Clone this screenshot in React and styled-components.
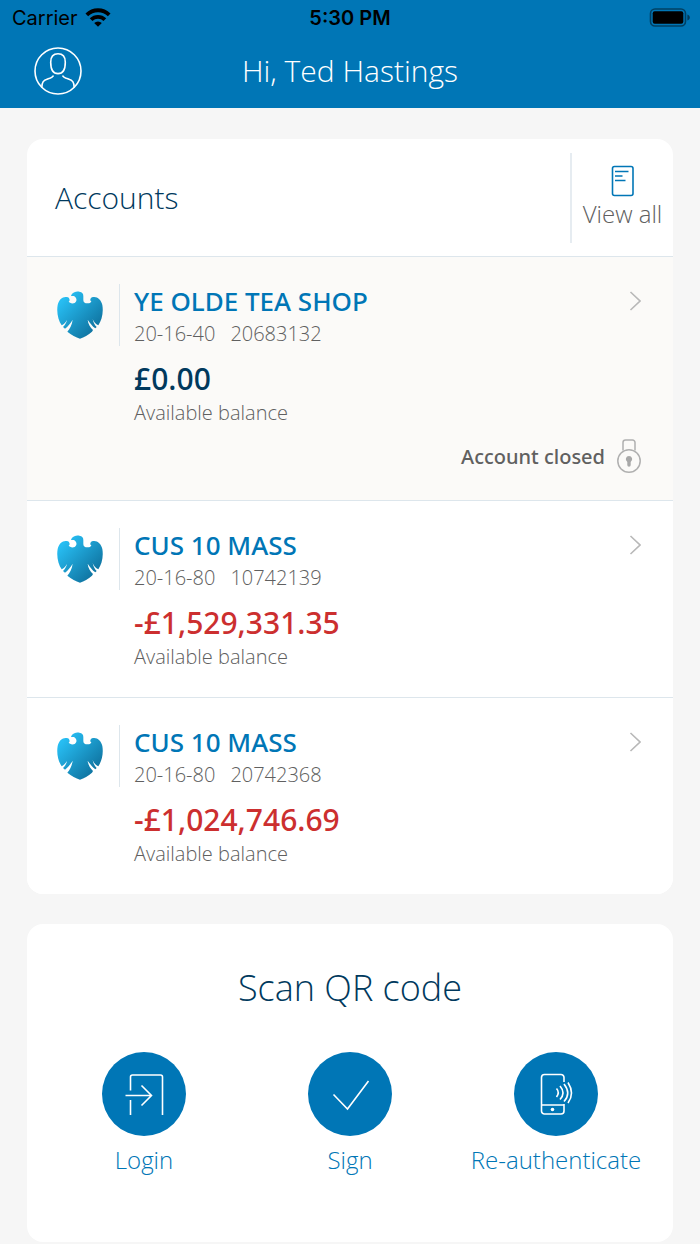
import React from 'react';
import styled, { createGlobalStyle } from 'styled-components';

const accounts = [
  {
    id: 1,
    name: 'YE OLDE TEA SHOP',
    sortCode: '20-16-40',
    number: '20683132',
    balance: '£0.00',
    closed: true,
  },
  {
    id: 2,
    name: 'CUS 10 MASS',
    sortCode: '20-16-80',
    number: '10742139',
    balance: '-£1,529,331.35',
    overdrawn: true,
  },
  {
    id: 3,
    name: 'CUS 10 MASS',
    sortCode: '20-16-80',
    number: '20742368',
    balance: '-£1,024,746.69',
    overdrawn: true,
  },
];

const WifiIcon = () => (
  <svg width="26" height="20" viewBox="0 0 26 20" aria-hidden="true">
    <g fill="none" stroke="#000" strokeWidth="3.8">
      <path d="M1.8 6.8a16 16 0 0 1 22.4 0" />
      <path d="M6.1 11.7a9.8 9.8 0 0 1 13.8 0" />
    </g>
    <path d="M9.2 15a5.4 5.4 0 0 1 7.6 0L13 18.8z" />
  </svg>
);

const BatteryIcon = () => (
  <svg width="42" height="20" viewBox="0 0 42 20" aria-hidden="true">
    <rect x="2.500" y="1" width="35" height="17" rx="4.5" fill="none" stroke="#000" strokeOpacity="0.45" strokeWidth="1.6" />
    <rect x="4.700" y="3.200" width="30.600" height="12.600" rx="2" />
    <path d="M39.400 6.400c1.600.6 2.400 1.700 2.400 3.100s-.8 2.500-2.400 3.100z" fillOpacity="0.5" />
  </svg>
);

const ProfileIcon = () => (
  <svg width="48" height="48" viewBox="0 0 48 48" fill="none" stroke="#fff" strokeWidth="1.6" aria-hidden="true">
    <circle cx="24" cy="24" r="23" />
    <path d="M24 6.8c4.6 0 7.3 2.6 7.3 8.4 0 7-2.7 11.4-7.3 11.4s-7.3-4.4-7.3-11.4c0-5.8 2.7-8.4 7.3-8.4z" />
    <path d="M19.4 28.4c-1 3.4-8.2 3.2-10.2 6.2-1.2 1.8-1.4 3.4-1.4 5.800M28.600 28.400c1 3.400 8.200 3.200 10.200 6.200 1.200 1.800 1.400 3.400 1.400 5.800" />
  </svg>
);

const StatementIcon = () => (
  <svg width="24" height="32" viewBox="0 0 24 32" fill="none" stroke="#0076b6" strokeWidth="1.6" aria-hidden="true">
    <rect x="1.5" y="1.5" width="20.5" height="29" rx="2" />
    <path d="M4 6.500h13.500M4 11h7.500M4 15.500h10.500" />
  </svg>
);

const ChevronIcon = () => (
  <Chevron width="12" height="20" viewBox="0 0 12 20" fill="none" stroke="#b8b8b8" strokeWidth="1.6" aria-hidden="true">
    <path d="M1.500 1l9.500 9-9.500 9" />
  </Chevron>
);

const PadlockIcon = () => (
  <svg width="24" height="35" viewBox="0 0 24 35" aria-hidden="true">
    <g fill="none" stroke="#b0b0b0" strokeWidth="1.5">
      <path d="M6 11.500V3.500a2.500 2.500 0 0 1 2.500-2.500h7A2.500 2.500 0 0 1 18 3.500V11.500" />
      <circle cx="12" cy="22" r="11.200" />
    </g>
    <path d="M12 17a3.200 3.200 0 0 1 1.700 5.900v3.100a1.700 1.700 0 0 1-3.400 0v-3.100a3.200 3.200 0 0 1 1.700-5.900z" fill="#a8a8a8" />
  </svg>
);

const EagleLogo = ({ id }) => (
  <svg width="46" height="48" viewBox="0 0 138 144" aria-hidden="true">
    <defs>
      <linearGradient id={id} x1="0" y1="0" x2="1" y2="1">
        <stop offset="0.15" stopColor="#27bdf2" />
        <stop offset="0.9" stopColor="#0d6c98" />
      </linearGradient>
    </defs>
    <path
      fill={`url(#${id})`}
      d="M42 15C46 4 58 1 67 2C76 3 79 8 79 16V27C79 34 83 37 92 37C99 37 102 34 103 30C99 32 98 23 105 19C118 14 132 24 136 42C140 66 134 88 124 103C116 99 110 93 107 84C109 95 113 102 119 108L115 112C106 106 99 96 92 86C93 98 100 109 108 117L105 122C94 131 81 139 69 143C57 139 43 131 31 122C38 114 45 102 47 86C40 97 33 106 24 113L18 108C24 102 29 94 30 87C26 94 20 100 14 103C4 88 -2 65 2 42C6 23 20 14 33 19C39 22 39 31 35 31C37 37 47 39 53 36C60 32 60 22 54 17C50 14 44 16 42 15Z"
    />
  </svg>
);

const LoginIcon = () => (
  <svg width="84" height="84" viewBox="0 0 84 84" fill="none" stroke="#fff" strokeWidth="1.6" aria-hidden="true">
    <path d="M28.500 38.500V25a2 2 0 0 1 2-2h28a2 2 0 0 1 2 2v38M28.500 48v15" />
    <path d="M23.500 43.500h25.500M39.500 33.500l10 10-10 10" />
  </svg>
);

const SignIcon = () => (
  <svg width="84" height="84" viewBox="0 0 84 84" fill="none" stroke="#fff" strokeWidth="1.6" aria-hidden="true">
    <path d="M25.500 42.500l14 14.500L60.500 29" />
  </svg>
);

const PhoneIcon = () => (
  <svg width="84" height="84" viewBox="0 0 84 84" fill="none" stroke="#fff" strokeWidth="1.6" aria-hidden="true">
    <path d="M50 30v-4.500a3 3 0 0 0-3-3H30.500a3 3 0 0 0-3 3V59a3 3 0 0 0 3 3H47a3 3 0 0 0 3-3V52M27.500 53H50" />
    <path d="M42.500 36.500q3.500 4 0 8.500M46 34q6 7 0 13.500M50 32q7.500 9.500 0 17.500M54 30.500q7 11 0 20.500" />
    <circle cx="38.500" cy="57.500" r="1.800" fill="#fff" stroke="none" />
  </svg>
);

const actions = [
  { label: 'Login', Icon: LoginIcon },
  { label: 'Sign', Icon: SignIcon },
  { label: 'Re-authenticate', Icon: PhoneIcon },
];

const App = () => (
  <>
    <GlobalStyle />
    <StatusBar>
      <Carrier>
        Carrier
        <WifiIcon />
      </Carrier>
      <Clock>5:30 PM</Clock>
      <Battery>
        <BatteryIcon />
      </Battery>
    </StatusBar>
    <Header>
      <ProfileButton aria-label="Profile">
        <ProfileIcon />
      </ProfileButton>
      <Greeting>Hi, Ted Hastings</Greeting>
    </Header>
    <Main>
      <Card>
        <CardHeader>
          <CardTitle>Accounts</CardTitle>
          <ViewAll>
            <StatementIcon />
            View all
          </ViewAll>
        </CardHeader>
        <AccountList>
          {accounts.map((account) => (
            <AccountRow key={account.id} $closed={account.closed}>
              <LogoCell>
                <EagleLogo id={`eagle-${account.id}`} />
              </LogoCell>
              <AccountInfo>
                <AccountName href="#">{account.name}</AccountName>
                <AccountNumber>
                  <span>{account.sortCode}</span>
                  <span>{account.number}</span>
                </AccountNumber>
                <Balance $overdrawn={account.overdrawn}>{account.balance}</Balance>
                <BalanceLabel>Available balance</BalanceLabel>
              </AccountInfo>
              <ChevronIcon />
              {account.closed && (
                <ClosedNote>
                  Account closed
                  <PadlockIcon />
                </ClosedNote>
              )}
            </AccountRow>
          ))}
        </AccountList>
      </Card>
      <Card>
        <ScanTitle>Scan QR code</ScanTitle>
        <Actions>
          {actions.map(({ label, Icon }) => (
            <Action key={label}>
              <ActionCircle>
                <Icon />
              </ActionCircle>
              {label}
            </Action>
          ))}
        </Actions>
      </Card>
    </Main>
  </>
);

const GlobalStyle = createGlobalStyle`
  * {
    box-sizing: border-box;
  }

  body {
    margin: 0;
    background: #f6f6f6;
    color: #606060;
    font-family: 'Open Sans', 'Noto Sans', sans-serif;
    font-weight: 300;
  }

  h1, h2, p, ul {
    margin: 0;
    padding: 0;
    font-weight: 300;
  }

  button {
    padding: 0;
    border: 0;
    background: none;
    color: inherit;
    font: inherit;
    cursor: pointer;
  }

  svg {
    display: block;
    flex: none;
  }
`;

const StatusBar = styled.div`
  display: grid;
  grid-template-columns: 1fr auto 1fr;
  align-items: center;
  height: 36px;
  padding: 0 10px;
  background: #0076b6;
  color: #000000;
  font-family: Inter, sans-serif;
  font-size: 20px;
  font-weight: 400;
`;

const Carrier = styled.div`
  display: flex;
  align-items: center;
  gap: 7px;
  padding-left: 2px;
`;

const Clock = styled.div`
  font-weight: 600;
`;

const Battery = styled.div`
  justify-self: end;
`;

const Header = styled.header`
  display: grid;
  grid-template-columns: 48px 1fr 48px;
  align-items: center;
  height: 72px;
  padding: 0 34px 2px;
  background: #0076b6;
`;

const ProfileButton = styled.button`
  width: 48px;
  height: 48px;
`;

const Greeting = styled.h1`
  color: #ffffff;
  font-size: 30px;
  line-height: 40px;
  text-align: center;
`;

const Main = styled.main`
  display: flex;
  flex-direction: column;
  gap: 30px;
  padding: 31px 27px 2px;
`;

const Card = styled.section`
  overflow: hidden;
  border-radius: 16px;
  background: #ffffff;
`;

const CardHeader = styled.div`
  display: flex;
  align-items: center;
  justify-content: space-between;
  height: 117px;
  padding-left: 28px;
`;

const CardTitle = styled.h2`
  color: #00395d;
  font-size: 30px;
  line-height: 40px;
`;

const ViewAll = styled.button`
  display: flex;
  flex-direction: column;
  align-items: center;
  justify-content: center;
  width: 103px;
  height: 90px;
  border-left: 2px solid #e6ecf1;
  font-size: 24px;
  line-height: 34px;
`;

const AccountList = styled.ul`
  list-style: none;
`;

const AccountRow = styled.li`
  display: grid;
  grid-template-columns: 63px 1fr 12px;
  padding: 27px 32px 26px 30px;
  border-top: 1px solid #dde6ec;
  background: ${(props) => (props.$closed ? '#fbfaf8' : '#ffffff')};
`;

const LogoCell = styled.div`
  height: 62px;
  padding-top: 7px;
  border-right: 1px solid #dde6ec;
`;

const Chevron = styled.svg`
  margin-top: 7px;
`;

const AccountInfo = styled.div`
  padding-left: 14px;
`;

const AccountName = styled.a`
  display: block;
  color: #0076b6;
  font-family: 'Noto Sans', sans-serif;
  font-size: 26px;
  font-weight: 500;
  line-height: 35px;
  text-decoration: none;
`;

const AccountNumber = styled.p`
  display: flex;
  gap: 15px;
  font-size: 20px;
  line-height: 30px;
`;

const Balance = styled.p`
  margin-top: 10px;
  color: ${(props) => (props.$overdrawn ? '#cc2f2f' : '#00395d')};
  font-family: 'Noto Sans', sans-serif;
  font-size: 30px;
  font-weight: 500;
  line-height: 40px;
`;

const BalanceLabel = styled.p`
  font-size: 20px;
  line-height: 28px;
`;

const ClosedNote = styled.div`
  display: flex;
  grid-column: 1 / -1;
  align-items: center;
  justify-content: flex-end;
  gap: 12px;
  margin-top: 12px;
  font-family: 'Noto Sans', sans-serif;
  font-size: 20px;
  font-weight: 500;
`;

const ScanTitle = styled.h2`
  padding-top: 40px;
  color: #00395d;
  font-size: 36px;
  line-height: 48px;
  text-align: center;
`;

const Actions = styled.div`
  display: grid;
  grid-template-columns: repeat(3, 1fr);
  padding: 40px 14px 66px;
`;

const Action = styled.button`
  display: flex;
  flex-direction: column;
  align-items: center;
  gap: 8px;
  color: #0076b6;
  font-size: 24px;
  line-height: 32px;
`;

const ActionCircle = styled.span`
  width: 84px;
  height: 84px;
  border-radius: 50%;
  background: #0076b6;
`;

export default App;
